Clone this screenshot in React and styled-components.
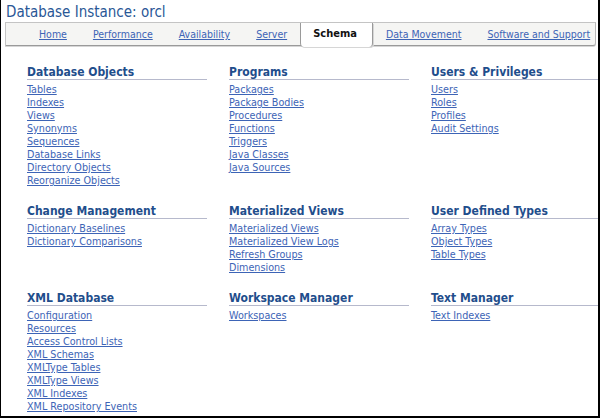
import styled, { createGlobalStyle } from "styled-components";

const GlobalStyle = createGlobalStyle`
  html, body {
    margin: 0;
    padding: 0;
    background: #ffffff;
  }
`;

const tabs = [
  { label: "Home" },
  { label: "Performance" },
  { label: "Availability" },
  { label: "Server" },
  { label: "Schema", active: true },
  { label: "Data Movement" },
  { label: "Software and Support" },
];

const sections = [
  {
    title: "Database Objects",
    links: [
      "Tables",
      "Indexes",
      "Views",
      "Synonyms",
      "Sequences",
      "Database Links",
      "Directory Objects",
      "Reorganize Objects",
    ],
  },
  {
    title: "Programs",
    links: [
      "Packages",
      "Package Bodies",
      "Procedures",
      "Functions",
      "Triggers",
      "Java Classes",
      "Java Sources",
    ],
  },
  {
    title: "Users & Privileges",
    links: ["Users", "Roles", "Profiles", "Audit Settings"],
  },
  {
    title: "Change Management",
    links: ["Dictionary Baselines", "Dictionary Comparisons"],
  },
  {
    title: "Materialized Views",
    links: [
      "Materialized Views",
      "Materialized View Logs",
      "Refresh Groups",
      "Dimensions",
    ],
  },
  {
    title: "User Defined Types",
    links: ["Array Types", "Object Types", "Table Types"],
  },
  {
    title: "XML Database",
    links: [
      "Configuration",
      "Resources",
      "Access Control Lists",
      "XML Schemas",
      "XMLType Tables",
      "XMLType Views",
      "XML Indexes",
      "XML Repository Events",
    ],
  },
  {
    title: "Workspace Manager",
    links: ["Workspaces"],
  },
  {
    title: "Text Manager",
    links: ["Text Indexes"],
  },
];

const App = () => {
  return (
    <>
      <GlobalStyle />
      <Frame>
        <Title>Database Instance: orcl</Title>
        <TabBar>
          {tabs.map((tab) => (
            <Tab key={tab.label} $active={tab.active}>
              {tab.active ? tab.label : <TabLink href="#">{tab.label}</TabLink>}
            </Tab>
          ))}
        </TabBar>
        <SectionGrid>
          {sections.map((section) => (
            <Section key={section.title}>
              <Heading>{section.title}</Heading>
              <LinkList>
                {section.links.map((link) => (
                  <ItemLink key={link} href="#">
                    {link}
                  </ItemLink>
                ))}
              </LinkList>
            </Section>
          ))}
        </SectionGrid>
      </Frame>
    </>
  );
};

const font = `"DejaVu Sans Condensed", "DejaVu Sans", "Liberation Sans", sans-serif`;

const Frame = styled.div`
  width: 600px;
  height: 418px;
  box-sizing: border-box;
  border-left: 1px solid #000;
  border-right: 2px solid #000;
  border-bottom: 2px solid #000;
  background: #fff;
  overflow: hidden;
  font-family: ${font};
  font-stretch: condensed;
`;

const Title = styled.h1`
  margin: 0;
  padding: 3px 0 0 5px;
  font-size: 15px;
  line-height: 18px;
  font-weight: normal;
  color: #2a5796;
`;

const TabBar = styled.div`
  display: flex;
  height: 22px;
  margin: 1px 2px 0 4px;
  padding-left: 20px;
  background: #f5f5f3;
  border-top: 1px solid #c4c4c4;
  border-left: 1px solid #c4c4c4;
  border-right: 1px solid #b8b8b8;
  border-bottom: 1px solid #9a9a9a;
  border-bottom-right-radius: 3px;
  box-shadow: 0 1px 0 #d6d6d6;
`;

const Tab = styled.div`
  flex-shrink: 0;
  white-space: nowrap;
  height: ${(p) => (p.$active ? "24px" : "22px")};
  padding: ${(p) => (p.$active ? "0 15px 0 12px" : "0 13px")};
  line-height: 22px;
  font-size: ${(p) => (p.$active ? "11px" : "10.5px")};
  font-weight: ${(p) => (p.$active ? "bold" : "normal")};
  color: #111;
  background: ${(p) => (p.$active ? "#ffffff" : "transparent")};
  border-left: ${(p) => (p.$active ? "1px solid #9a9a9a" : "none")};
  border-right: ${(p) => (p.$active ? "1px solid #9a9a9a" : "none")};
  border-radius: 0 0 4px 4px;
  box-shadow: ${(p) => (p.$active ? "1px 1px 0 #d6d6d6" : "none")};
  position: relative;
  z-index: 1;
`;

const TabLink = styled.a`
  color: #3d64b6;
  text-decoration: underline;
`;

const SectionGrid = styled.div`
  display: grid;
  grid-template-columns: repeat(3, 180px);
  column-gap: 22px;
  row-gap: 17px;
  padding: 19px 0 0 26px;
`;

const Section = styled.div`
  display: flex;
  flex-direction: column;
`;

const Heading = styled.div`
  font-size: 12px;
  line-height: 14px;
  font-weight: bold;
  color: #1f4e8c;
  border-bottom: 1px solid #b6b9cc;
  white-space: nowrap;
`;

const LinkList = styled.div`
  display: flex;
  flex-direction: column;
  align-items: flex-start;
  padding-top: 3px;
`;

const ItemLink = styled.a`
  font-size: 10.7px;
  line-height: 13px;
  color: #3d64b6;
  text-decoration: underline;
  white-space: nowrap;
`;

export default App;
